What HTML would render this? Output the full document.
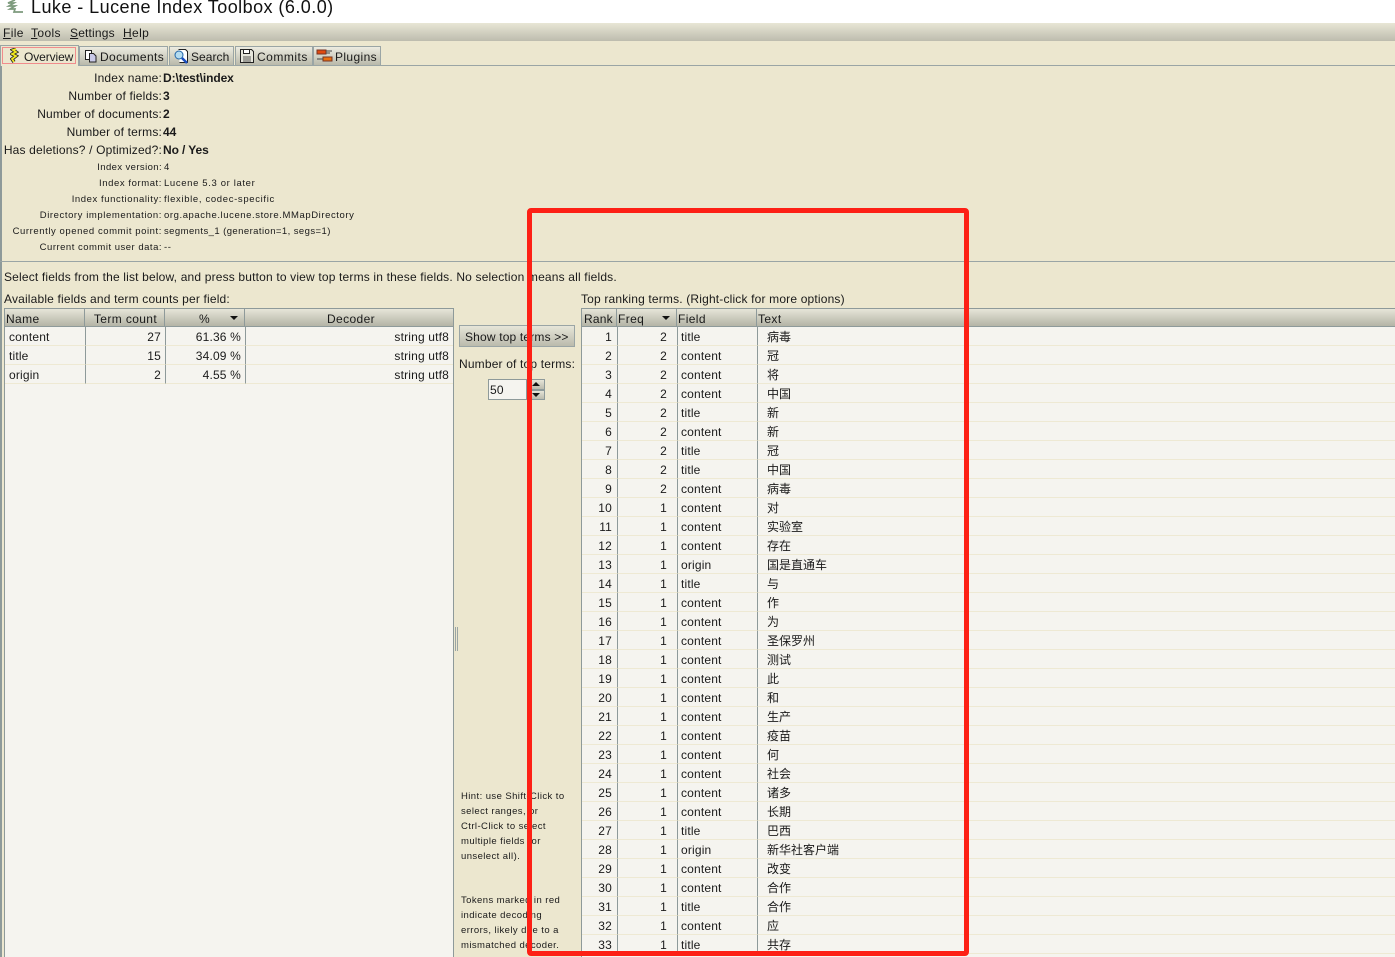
<!DOCTYPE html>
<html><head><meta charset="utf-8"><style>
html,body{margin:0;padding:0;overflow:hidden}
body{width:1395px;height:957px;overflow:hidden;position:relative;background:#ece7cf;font:12px "Liberation Sans","Noto Sans CJK SC",sans-serif;color:#1a1a1a;letter-spacing:.17px}
.a{position:absolute;white-space:nowrap}
.l{position:absolute;right:1233px;white-space:nowrap;text-align:right}
.v{position:absolute;left:163px;white-space:nowrap;font-weight:bold;letter-spacing:-.1px}
.s{font-size:9.5px;letter-spacing:.58px;margin-top:1px}
.m{letter-spacing:.38px}
.tab{position:absolute;top:46px;height:19px;box-sizing:border-box;border:1px solid #9aa5a5;border-bottom:0;background:linear-gradient(#ecebe0,#b9b9aa);line-height:20px;letter-spacing:.38px}
.hd{position:absolute;top:308px;height:19px;box-sizing:border-box;background:linear-gradient(#e6e5d8,#b4b4a6);border-top:1px solid #8e9a9a;border-bottom:1px solid #8e9a9a;border-right:1px solid #8e9a9a;line-height:20px;overflow:hidden;letter-spacing:.38px}
table{position:absolute;border-collapse:separate;border-spacing:0;table-layout:fixed;background:#f5f4ef}
tr{height:19px}
td{height:19px;padding:2px 4px 0;border-bottom:1px solid #eee9d3;border-right:1px solid #8e9a9a;white-space:nowrap;overflow:hidden;line-height:16px;box-sizing:border-box}
.r{text-align:right}
#t2 td:nth-child(1){padding-right:5px}
#t2 td:nth-child(2){padding-right:10px}
#t2 td:nth-child(3){padding-left:3px}
#t2 td:last-child{border-right:0;padding-left:9px;letter-spacing:0}
.h{font-size:9.5px;letter-spacing:.42px;line-height:15px;left:461px}
</style></head><body>
<!-- title bar -->
<div class="a" style="left:0;top:0;width:1395px;height:23px;background:#fff"></div>
<svg class="a" style="left:6px;top:0" width="18" height="14" viewBox="0 0 18 14"><path d="M9 0 2 3h6L3 6h6L4 9h5l-1 3h9" fill="none" stroke="#7d9a7d" stroke-width="1.7"/></svg>
<div class="a" style="left:31px;top:-4px;font-size:18px;line-height:22px;letter-spacing:.45px;color:#111">Luke - Lucene Index Toolbox (6.0.0)</div>
<!-- menu -->
<div class="a" style="left:0;top:23px;width:1395px;height:18px;background:linear-gradient(#e8e6d5,#bdbcae)"></div>
<div class="a m" style="left:3px;top:26px;line-height:14px"><u>F</u>ile</div>
<div class="a m" style="left:31px;top:26px;line-height:14px"><u>T</u>ools</div>
<div class="a" style="left:70px;top:26px;line-height:14px"><u>S</u>ettings</div>
<div class="a m" style="left:123px;top:26px;line-height:14px"><u>H</u>elp</div>
<!-- tabs -->
<div class="a" style="left:0;top:41px;width:1395px;height:24px;background:#ece7cf"></div>
<div class="a" style="left:0;top:65px;width:1395px;height:1px;background:#9aa5a5"></div>
<div class="a" style="left:0;top:65px;width:2px;height:892px;background:#8e9a9a"></div>
<div class="tab" style="left:0;width:79px;top:45px;height:21px;background:#ece7cf"></div>
<div class="a" style="left:2px;top:47px;width:74px;height:17px;box-sizing:border-box;border:1px solid #f08c8c"></div>
<svg class="a" style="left:10px;top:48px" width="9" height="15" viewBox="0 0 9 15"><path d="M6 1 3 2 6 4 2 6 6 8 2 11 4 14" fill="none" stroke="#222" stroke-width="3.4"/><path d="M6 1 3 2 6 4 2 6 6 8 2 11 4 14" fill="none" stroke="#f0e820" stroke-width="1.8"/></svg>
<div class="a" style="left:24px;top:50px;line-height:14px;letter-spacing:-.1px">Overview</div>
<div class="tab" style="left:79px;width:89px"><svg class="a" style="left:4px;top:2px" width="14" height="15" viewBox="0 0 14 15"><rect x="1.5" y="1.5" width="6" height="9" fill="#fff" stroke="#222"/><path d="M5.500 4.500h4l2.500 2.500v6h-6.500z" fill="#c9c9e8" stroke="#222"/></svg><span class="a" style="left:20px;top:0">Documents</span></div>
<div class="tab" style="left:169px;width:65px"><svg class="a" style="left:3px;top:1px" width="16" height="16" viewBox="0 0 16 16"><path d="M5.500 1.500h7l2 2v11h-8" fill="#fff" stroke="#222"/><circle cx="6" cy="7" r="4" fill="#b5dcf0" stroke="#26a"/><path d="M9 10l5 5" stroke="#1a4fc0" stroke-width="2.500"/></svg><span class="a" style="left:21px;top:0;letter-spacing:.05px">Search</span></div>
<div class="tab" style="left:235px;width:78px"><svg class="a" style="left:4px;top:2px" width="14" height="14" viewBox="0 0 14 14"><path d="M.5.500h11l2 2v11H.5z" fill="#e6e6dc" stroke="#222"/><rect x="3.500" y=".5" width="6" height="4" fill="#fff" stroke="#222"/><path d="M3 8h8M3 10h8M3 12h8" stroke="#555"/></svg><span class="a" style="left:21px;top:0;letter-spacing:.5px">Commits</span></div>
<div class="tab" style="left:313px;width:68px"><svg class="a" style="left:2px;top:2px" width="18" height="14" viewBox="0 0 18 14"><rect x="1" y="1" width="9" height="4" fill="#e04a10" stroke="#732"/><path d="M10 2h6M10 4h4" stroke="#444"/><rect x="7" y="8" width="9" height="4" fill="#e87010" stroke="#732"/><path d="M1 10h6" stroke="#444"/></svg><span class="a" style="left:21px;top:0">Plugins</span></div>
<!-- info -->
<div class="l" style="top:71px">Index name:</div><div class="v" style="top:71px">D:\test\index</div>
<div class="l" style="top:89px">Number of fields:</div><div class="v" style="top:89px">3</div>
<div class="l" style="top:107px">Number of documents:</div><div class="v" style="top:107px">2</div>
<div class="l" style="top:125px">Number of terms:</div><div class="v" style="top:125px">44</div>
<div class="l" style="top:143px">Has deletions? / Optimized?:</div><div class="v" style="top:143px">No / Yes</div>
<div class="l s" style="top:161px;letter-spacing:.4px">Index version:</div><div class="a s" style="left:164px;top:161px">4</div>
<div class="l s" style="top:177px">Index format:</div><div class="a s" style="left:164px;top:177px;letter-spacing:.64px">Lucene 5.3 or later</div>
<div class="l s" style="top:193px">Index functionality:</div><div class="a s" style="left:164px;top:193px;letter-spacing:.66px">flexible, codec-specific</div>
<div class="l s" style="top:209px">Directory implementation:</div><div class="a s" style="left:164px;top:209px">org.apache.lucene.store.MMapDirectory</div>
<div class="l s" style="top:225px">Currently opened commit point:</div><div class="a s" style="left:164px;top:225px;letter-spacing:.43px">segments_1 (generation=1, segs=1)</div>
<div class="l s" style="top:241px;letter-spacing:.5px">Current commit user data:</div><div class="a s" style="left:164px;top:241px">--</div>
<div class="a" style="left:0;top:261px;width:1395px;height:1px;background:#9aa5a5"></div>
<div class="a" style="left:4px;top:270px">Select fields from the list below, and press button to view top terms in these fields. No selection means all fields.</div>
<div class="a" style="left:4px;top:292px">Available fields and term counts per field:</div>
<div class="a" style="left:581px;top:292px">Top ranking terms. (Right-click for more options)</div>
<!-- left panel -->
<div class="a" style="left:4px;top:308px;width:450px;height:649px;background:#f5f4ef;border-right:1px solid #8e9a9a;border-left:1px solid #8e9a9a;box-sizing:border-box"></div>
<div class="hd" style="left:4px;width:81px;border-left:1px solid #8e9a9a;padding-left:1px">Name</div>
<div class="hd" style="left:85px;width:80px;text-align:center;padding-left:2px;box-sizing:border-box">Term count</div>
<div class="hd" style="left:165px;width:80px;padding-left:34px;box-sizing:border-box">%<span class="a" style="left:65px;top:7px;border:4px solid transparent;border-top:4px solid #111;border-bottom:0"></span></div>
<div class="hd" style="left:245px;width:209px;text-align:center;padding-left:4px;box-sizing:border-box">Decoder</div>
<table style="left:5px;top:327px;width:448px">
<colgroup><col style="width:81px"><col style="width:80px"><col style="width:80px"><col style="width:207px"></colgroup>
<tr><td>content</td><td class="r">27</td><td class="r">61.36 %</td><td class="r" style="border-right:0">string utf8</td></tr>
<tr><td>title</td><td class="r">15</td><td class="r">34.09 %</td><td class="r" style="border-right:0">string utf8</td></tr>
<tr><td>origin</td><td class="r">2</td><td class="r">4.55 %</td><td class="r" style="border-right:0">string utf8</td></tr>
</table>
<!-- splitter -->
<div class="a" style="left:455px;top:627px;width:1px;height:24px;background:#9aa5a5"></div>
<div class="a" style="left:457px;top:627px;width:1px;height:24px;background:#9aa5a5"></div>
<!-- middle -->
<div class="a" style="left:459px;top:325px;width:116px;height:22px;box-sizing:border-box;border:1px solid #9aa5a5;background:linear-gradient(#e6e5d8,#bbbbad);line-height:22px;padding-left:5px">Show top terms &gt;&gt;</div>
<div class="a" style="left:459px;top:357px">Number of top terms:</div>
<div class="a" style="left:488px;top:379px;width:39px;height:21px;box-sizing:border-box;border:1px solid #8e9a9a;background:#f5f4ef;line-height:20px;padding-left:1px">50</div>
<div class="a" style="left:527px;top:379px;width:18px;height:11px;box-sizing:border-box;border:1px solid #8e9a9a;background:linear-gradient(#e6e5d8,#bbbbad)"><span class="a" style="left:4px;top:2px;border:4px solid transparent;border-bottom:4px solid #111;border-top:0"></span></div>
<div class="a" style="left:527px;top:390px;width:18px;height:10px;box-sizing:border-box;border:1px solid #8e9a9a;background:linear-gradient(#e6e5d8,#bbbbad)"><span class="a" style="left:4px;top:2px;border:4px solid transparent;border-top:4px solid #111;border-bottom:0"></span></div>
<div class="a h" style="top:789px">Hint: use Shift-Click to<br>select ranges, or<br>Ctrl-Click to select<br>multiple fields (or<br>unselect all).</div>
<div class="a h" style="top:893px">Tokens marked in red<br>indicate decoding<br>errors, likely due to a<br>mismatched decoder.</div>
<!-- right table -->
<div class="a" style="left:581px;top:308px;width:814px;height:649px;background:#f5f4ef;border-left:1px solid #8e9a9a;box-sizing:border-box"></div>
<div class="hd" style="left:581px;width:36px;border-left:1px solid #8e9a9a;padding-left:2px;letter-spacing:.2px">Rank</div>
<div class="hd" style="left:617px;width:60px;padding-left:1px">Freq<span class="a" style="left:45px;top:7px;border:4px solid transparent;border-top:4px solid #111;border-bottom:0"></span></div>
<div class="hd" style="left:677px;width:80px;padding-left:1px">Field</div>
<div class="hd" style="left:757px;width:638px;padding-left:1px;border-right:0">Text</div>
<table id="t2" style="left:582px;top:327px;width:813px">
<colgroup><col style="width:36px"><col style="width:60px"><col style="width:80px"><col></colgroup>
<tr><td class="r">1</td><td class="r">2</td><td>title</td><td>病毒</td></tr>
<tr><td class="r">2</td><td class="r">2</td><td>content</td><td>冠</td></tr>
<tr><td class="r">3</td><td class="r">2</td><td>content</td><td>将</td></tr>
<tr><td class="r">4</td><td class="r">2</td><td>content</td><td>中国</td></tr>
<tr><td class="r">5</td><td class="r">2</td><td>title</td><td>新</td></tr>
<tr><td class="r">6</td><td class="r">2</td><td>content</td><td>新</td></tr>
<tr><td class="r">7</td><td class="r">2</td><td>title</td><td>冠</td></tr>
<tr><td class="r">8</td><td class="r">2</td><td>title</td><td>中国</td></tr>
<tr><td class="r">9</td><td class="r">2</td><td>content</td><td>病毒</td></tr>
<tr><td class="r">10</td><td class="r">1</td><td>content</td><td>对</td></tr>
<tr><td class="r">11</td><td class="r">1</td><td>content</td><td>实验室</td></tr>
<tr><td class="r">12</td><td class="r">1</td><td>content</td><td>存在</td></tr>
<tr><td class="r">13</td><td class="r">1</td><td>origin</td><td>国是直通车</td></tr>
<tr><td class="r">14</td><td class="r">1</td><td>title</td><td>与</td></tr>
<tr><td class="r">15</td><td class="r">1</td><td>content</td><td>作</td></tr>
<tr><td class="r">16</td><td class="r">1</td><td>content</td><td>为</td></tr>
<tr><td class="r">17</td><td class="r">1</td><td>content</td><td>圣保罗州</td></tr>
<tr><td class="r">18</td><td class="r">1</td><td>content</td><td>测试</td></tr>
<tr><td class="r">19</td><td class="r">1</td><td>content</td><td>此</td></tr>
<tr><td class="r">20</td><td class="r">1</td><td>content</td><td>和</td></tr>
<tr><td class="r">21</td><td class="r">1</td><td>content</td><td>生产</td></tr>
<tr><td class="r">22</td><td class="r">1</td><td>content</td><td>疫苗</td></tr>
<tr><td class="r">23</td><td class="r">1</td><td>content</td><td>何</td></tr>
<tr><td class="r">24</td><td class="r">1</td><td>content</td><td>社会</td></tr>
<tr><td class="r">25</td><td class="r">1</td><td>content</td><td>诸多</td></tr>
<tr><td class="r">26</td><td class="r">1</td><td>content</td><td>长期</td></tr>
<tr><td class="r">27</td><td class="r">1</td><td>title</td><td>巴西</td></tr>
<tr><td class="r">28</td><td class="r">1</td><td>origin</td><td>新华社客户端</td></tr>
<tr><td class="r">29</td><td class="r">1</td><td>content</td><td>改变</td></tr>
<tr><td class="r">30</td><td class="r">1</td><td>content</td><td>合作</td></tr>
<tr><td class="r">31</td><td class="r">1</td><td>title</td><td>合作</td></tr>
<tr><td class="r">32</td><td class="r">1</td><td>content</td><td>应</td></tr>
<tr><td class="r">33</td><td class="r">1</td><td>title</td><td>共存</td></tr>
</table>
<!-- red annotation -->
<div class="a" style="left:527px;top:208px;width:442px;height:748px;box-sizing:border-box;border:5px solid #fd2015;border-radius:4px"></div>
</body></html>
